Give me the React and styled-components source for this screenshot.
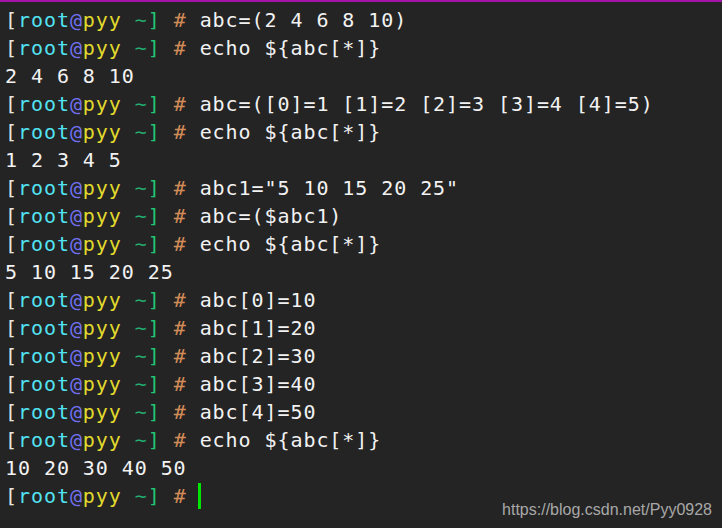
import React from 'react';
import styled, { createGlobalStyle } from 'styled-components';

const GlobalStyle = createGlobalStyle`
    html, body {
        margin: 0;
        padding: 0;
        background: #242424;
    }
`;

const Window = styled.div`
    position: relative;
    width: 722px;
    height: 528px;
    background: #242424;
    border-top: 2px solid #a313a8;
    box-sizing: border-box;
    overflow: hidden;
`;

const Screen = styled.div`
    padding: 4px 0 0 5px;
    font-family: 'DejaVu Sans Mono', 'Liberation Mono', monospace;
    font-size: 20px;
    letter-spacing: 0.93px;
    line-height: 28px;
    color: #f2f2f2;
    white-space: pre;
`;

const Line = styled.div`
    height: 28px;
    display: flex;
    align-items: center;
`;

const Part = styled.span`
    color: ${(p) => p.$color};
`;

const Cursor = styled.span`
    display: inline-block;
    width: 3px;
    height: 26px;
    margin-left: -2px;
    background: #00e600;
`;

const Watermark = styled.div`
    position: absolute;
    right: 10px;
    bottom: 9px;
    font-family: 'Liberation Sans', Arial, sans-serif;
    font-size: 16px;
    color: #a8a8a8;
`;

const Prompt = () => (
    <>
        <Part $color="#e8e8e0">[</Part>
        <Part $color="#52e2f2">root</Part>
        <Part $color="#7272f2">@</Part>
        <Part $color="#e2da2c">pyy</Part>
        <Part $color="#22b072"> ~</Part>
        <Part $color="#22c472">]</Part>
        <Part $color="#d38c58"> # </Part>
    </>
);

const lines = [
    { cmd: 'abc=(2 4 6 8 10)' },
    { cmd: 'echo ${abc[*]}' },
    { out: '2 4 6 8 10' },
    { cmd: 'abc=([0]=1 [1]=2 [2]=3 [3]=4 [4]=5)' },
    { cmd: 'echo ${abc[*]}' },
    { out: '1 2 3 4 5' },
    { cmd: 'abc1="5 10 15 20 25"' },
    { cmd: 'abc=($abc1)' },
    { cmd: 'echo ${abc[*]}' },
    { out: '5 10 15 20 25' },
    { cmd: 'abc[0]=10' },
    { cmd: 'abc[1]=20' },
    { cmd: 'abc[2]=30' },
    { cmd: 'abc[3]=40' },
    { cmd: 'abc[4]=50' },
    { cmd: 'echo ${abc[*]}' },
    { out: '10 20 30 40 50' },
];

const App = () => {
    return (
        <>
            <GlobalStyle />
            <Window>
                <Screen>
                    {lines.map((l, i) => (
                        <Line key={i}>
                            {l.out !== undefined ? (
                                l.out
                            ) : (
                                <>
                                    <Prompt />
                                    {l.cmd}
                                </>
                            )}
                        </Line>
                    ))}
                    <Line>
                        <Prompt />
                        <Cursor />
                    </Line>
                </Screen>
                <Watermark>https://blog.csdn.net/Pyy0928</Watermark>
            </Window>
        </>
    );
};

export default App;
